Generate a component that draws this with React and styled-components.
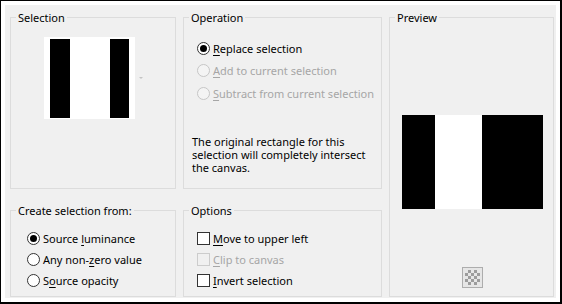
import React from 'react';
import styled, { createGlobalStyle, css } from 'styled-components';

const GlobalStyle = createGlobalStyle`
  html, body {
    margin: 0;
    padding: 0;
    background: #fff;
  }
  body {
    font-family: "Noto Sans", "Liberation Sans", sans-serif;
    font-size: 11px;
    color: #000;
  }
`;

const Frame = styled.div`
  width: 562px;
  height: 304px;
  box-sizing: border-box;
  border-style: solid;
  border-color: #000;
  border-width: 1px 2px 2px 1px;
  background: #fff;
  padding: 4px;
`;

const Dialog = styled.div`
  height: 100%;
  box-sizing: border-box;
  background: #f0f0f0;
  padding: 5px 2px 1px 5px;
  display: grid;
  grid-template-columns: 166px 199px 165px;
  grid-template-rows: 179px 94px;
  column-gap: 7px;
  row-gap: 14px;
`;

const GroupBox = styled.fieldset`
  margin: 0;
  padding: 0;
  min-width: 0;
  box-sizing: border-box;
  border: 1px solid #dcdcdc;
  display: flex;
  flex-direction: column;
  ${(p) => p.$tall && css`grid-column: 3; grid-row: 1 / span 2;`}
`;

const Legend = styled.legend`
  margin-left: 5px;
  padding: 0 2px;
  font-size: 11px;
  line-height: 15px;
`;

const SelectionBody = styled.div`
  display: flex;
  align-items: center;
  padding: 12px 0 0 33px;
`;

const DropArrow = styled.span`
  margin-left: 4px;
  width: 0;
  height: 0;
  border-left: 2px solid transparent;
  border-right: 2px solid transparent;
  border-top: 2px solid #c4c4c4;
`;

const OptionList = styled.div`
  display: flex;
  flex-direction: column;
  padding: ${(p) => p.$pad};
`;

const OptionRow = styled.label`
  display: flex;
  align-items: center;
  gap: 3px;
  height: ${(p) => p.$h}px;
  line-height: 15px;
  color: ${(p) => (p.$disabled ? '#a6a6a6' : '#000')};
`;

const Radio = styled.span`
  width: 13px;
  height: 13px;
  box-sizing: border-box;
  border-radius: 50%;
  border: 1px solid ${(p) => (p.$disabled ? '#c6c6c6' : '#333')};
  background: ${(p) => (p.$disabled ? '#f4f4f4' : '#fff')};
  display: flex;
  align-items: center;
  justify-content: center;
  flex: none;
  &::after {
    content: '';
    width: 7px;
    height: 7px;
    border-radius: 50%;
    background: ${(p) => (p.$checked ? '#000' : 'transparent')};
  }
`;

const Check = styled.span`
  width: 13px;
  height: 13px;
  box-sizing: border-box;
  border: 1px solid ${(p) => (p.$disabled ? '#cccccc' : '#333')};
  background: ${(p) => (p.$disabled ? '#f0f0f0' : '#fff')};
  flex: none;
`;

const Key = styled.span`
  text-decoration: underline;
  text-decoration-thickness: 1px;
  text-underline-offset: 2px;
`;

const Note = styled.p`
  margin: 30px 0 0;
  padding-left: 8px;
  line-height: 13px;
`;

const PreviewBody = styled.div`
  display: flex;
  flex-direction: column;
  align-items: center;
  padding: 90px 0 0 2px;
`;

const CheckerButton = styled.div`
  margin-top: 58px;
  width: 21px;
  height: 21px;
  box-sizing: border-box;
  border: 1px solid #adadad;
  padding: 2px;
  background: #e6e6e6;
  &::before {
    content: '';
    display: block;
    width: 100%;
    height: 100%;
    background: repeating-conic-gradient(#9c9c9c 0 25%, #e6e6e6 0 50%) 0 0 / 6px 6px;
  }
`;

const SelectionThumb = () => (
  <svg width="91" height="82" viewBox="0 0 91 82">
    <rect width="91" height="82" fill="#fff" />
    <rect x="6" y="2" width="20" height="79" fill="#000" />
    <rect x="66" y="2" width="19" height="79" fill="#000" />
  </svg>
);

const PreviewImage = () => (
  <svg width="141" height="94" viewBox="0 0 141 94">
    <rect width="141" height="94" fill="#000" />
    <rect x="33" width="47" height="94" fill="#fff" />
  </svg>
);

const Option = ({ kind, checked, disabled, h, children }) => (
  <OptionRow $h={h} $disabled={disabled}>
    {kind === 'radio' ? (
      <Radio $checked={checked} $disabled={disabled} />
    ) : (
      <Check $disabled={disabled} />
    )}
    <span>{children}</span>
  </OptionRow>
);

export default function App() {
  return (
    <>
      <GlobalStyle />
      <Frame>
        <Dialog>
          <GroupBox>
            <Legend>Selection</Legend>
            <SelectionBody>
              <SelectionThumb />
              <DropArrow />
            </SelectionBody>
          </GroupBox>

          <GroupBox>
            <Legend>Operation</Legend>
            <OptionList $pad="12px 0 0 13px">
              <Option kind="radio" checked h={22.5}>
                <Key>R</Key>eplace selection
              </Option>
              <Option kind="radio" disabled h={22.5}>
                <Key>A</Key>dd to current selection
              </Option>
              <Option kind="radio" disabled h={22.5}>
                <Key>S</Key>ubtract from current selection
              </Option>
            </OptionList>
            <Note>
              The original rectangle for this
              <br />
              selection will completely intersect
              <br />
              the canvas.
            </Note>
          </GroupBox>

          <GroupBox $tall>
            <Legend>Preview</Legend>
            <PreviewBody>
              <PreviewImage />
              <CheckerButton />
            </PreviewBody>
          </GroupBox>

          <GroupBox>
            <Legend>Create selection from:</Legend>
            <OptionList $pad="10px 0 0 16px">
              <Option kind="radio" checked h={21}>
                Source <Key>l</Key>uminance
              </Option>
              <Option kind="radio" h={21}>
                Any non-<Key>z</Key>ero value
              </Option>
              <Option kind="radio" h={21}>
                S<Key>o</Key>urce opacity
              </Option>
            </OptionList>
          </GroupBox>

          <GroupBox>
            <Legend>Options</Legend>
            <OptionList $pad="10px 0 0 13px">
              <Option kind="check" h={21}>
                <Key>M</Key>ove to upper left
              </Option>
              <Option kind="check" disabled h={21}>
                <Key>C</Key>lip to canvas
              </Option>
              <Option kind="check" h={21}>
                <Key>I</Key>nvert selection
              </Option>
            </OptionList>
          </GroupBox>
        </Dialog>
      </Frame>
    </>
  );
}
